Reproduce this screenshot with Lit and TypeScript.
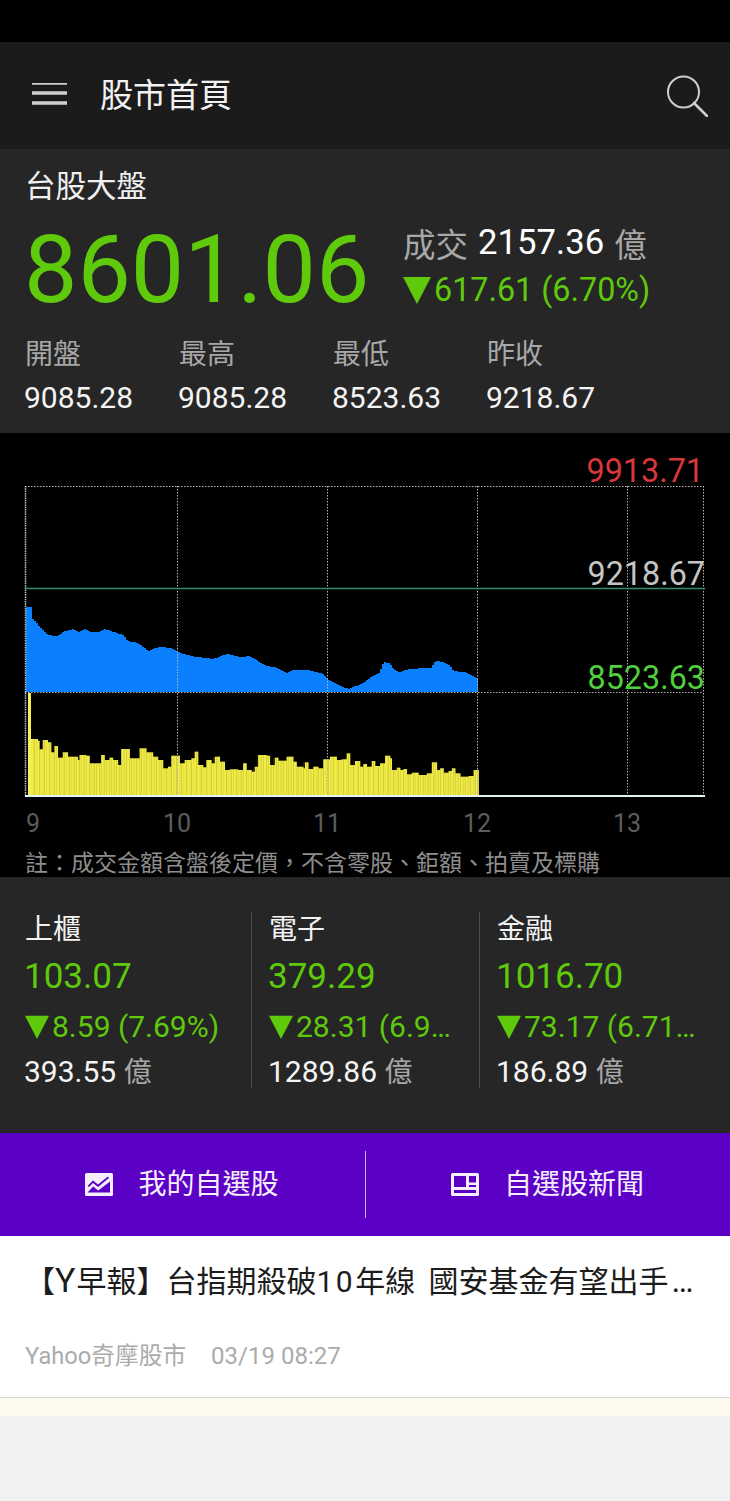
import { LitElement, html, css, svg } from "lit";
import { customElement } from "lit/decorators.js";

const BLUE: [number, number][] = [
  [26,607],[30,607],[31,618],[35,622],[40,628],[47,635],[57,636],[62,632],[72,629],[77,632],[83,629],[90,632],[97,632],
  [103,629],[110,631],[122,635],[127,641],[137,643],[145,649],[148,651],[153,648],[162,647],[170,648],[177,652],
  [190,656],[205,658],[212,659],[220,656],[227,654],[240,657],[248,656],[257,661],[265,666],[273,667],[287,673],
  [292,670],[307,670],[322,674],[328,680],[340,686],[348,689],[355,686],[362,683],[372,676],[378,673],[383,662],
  [388,663],[393,669],[399,673],[403,670],[422,668],[430,668],[435,661],[442,662],[448,665],[453,671],[463,672],
  [473,676],[478,679],
];

const Y1: [number, number][] = [
  [25,308],[33,447],[50,452],[55,478],[65,450],[80,457],[90,487],[100,468],[110,503],[125,487],[140,500],[170,510],
  [175,495],[195,497],[205,520],[240,495],[250,510],[265,503],[275,510],[290,525],[300,477],[325,505],[355,475],
  [375,487],[395,500],[410,510],[425,535],[440,530],[450,497],[475,520],[490,510],[510,505],[520,485],[530,525],
  [545,532],[555,510],[570,520],[580,500],[595,515],[610,540],[625,538],[650,540],[665,520],[675,540],[690,545],
  [700,530],[710,500],
];
const Y2: [number, number][] = [
  [0,520],[20,540],[40,520],[50,495],[75,497],[85,525],[100,503],[110,512],[135,500],[155,515],[165,530],[185,535],
  [190,517],[200,537],[215,530],[230,535],[245,508],[265,500],[285,510],[300,508],[315,490],[325,525],[340,513],
  [355,530],[365,522],[380,530],[395,513],[405,528],[420,520],[435,497],[448,505],[455,540],[470,533],[480,540],
  [490,537],[500,553],[515,548],[535,555],[560,550],[575,517],[590,540],[600,535],[610,548],[625,543],[635,535],
  [645,550],[660,560],[685,558],[700,540],
];
const YELLOW: [number, number][] = [
  ...Y1.map(([x, y]): [number, number] => [20 + x / 3, 590 + y / 3]),
  ...Y2.map(([x, y]): [number, number] => [240 + x / 3, 590 + y / 3]),
];

function barTop(x: number): number {
  let top = YELLOW[0][1];
  for (const [px, py] of YELLOW) {
    if (px <= x) top = py;
    else break;
  }
  return top;
}

function blueAt(x: number): number {
  for (let i = 1; i < BLUE.length; i++) {
    const [x0, y0] = BLUE[i - 1];
    const [x1, y1] = BLUE[i];
    if (x <= x1) return y0 + ((y1 - y0) * (x - x0)) / (x1 - x0);
  }
  return BLUE[BLUE.length - 1][1];
}

function bluePath(): string {
  let d = "M26 692";
  for (let x = 26; x < 478; x += 2) {
    const y = Math.round(blueAt(x));
    d += ` L${x} ${y} L${x + 2} ${y}`;
  }
  return d + " L478 692 Z";
}

function yellowBars() {
  const out = [];
  for (let x = 31; x < 478.5; x += 1.67) {
    const t = barTop(x);
    const w = Math.min(2, 479 - x);
    out.push(svg`<rect x=${x.toFixed(2)} y=${t.toFixed(1)} width=${w.toFixed(2)} height=${(796 - t).toFixed(1)} fill="#f0eb45"></rect>`);
  }
  for (let x = 33; x < 478; x += 3.34) {
    const t = barTop(x);
    out.push(svg`<rect x=${x.toFixed(2)} y=${t.toFixed(1)} width="0.5" height=${(796 - t).toFixed(1)} fill="#bdb935" opacity="0.35"></rect>`);
  }
  return out;
}

const VLINES = [177, 327, 477, 627, 703];
const XLABELS: [number, string][] = [[33, "9"], [177, "10"], [327, "11"], [477, "12"], [627, "13"]];

@customElement("app-root")
export class AppRoot extends LitElement {
  static styles = css`
    :host {
      display: block;
      width: 730px;
      height: 1501px;
      overflow: hidden;
      background: #f1f1f3;
      font-family: Roboto, "Noto Sans CJK TC", sans-serif;
    }
    .status { height: 42px; background: #000; }
    .bar {
      height: 107px;
      background: #1b1b1b;
      display: flex;
      align-items: center;
      padding: 0 22px 0 32px;
      box-sizing: border-box;
      color: #f2f2f2;
    }
    .bar h1 {
      margin: 0 0 0 33px;
      font-size: 33px;
      font-weight: 400;
      line-height: 40px;
      flex: 1;
    }
    .bar svg { display: block; }
    .panel { background: #262626; color: #f2f2f2; }
    .index { height: 284px; padding: 17px 0 0 25px; box-sizing: border-box; }
    .index h2 { margin: 0; font-size: 30.5px; font-weight: 400; line-height: 42px; color: #f0f0f0; }
    .main { display: flex; margin-top: 11px; height: 100px; }
    .big {
      font-size: 95px;
      line-height: 100px;
      color: #5fc90c;
      width: 379px;
      margin: 1px 0 0 -1px;
    }
    .side { font-size: 34.7px; }
    .side .row { display: flex; align-items: center; white-space: nowrap; height: 46px; }
    .side .row + .row { margin-top: 1px; height: 47px; }
    .muted { color: #a8a8a8; font-size: 32.5px; }
    .val { color: #fff; margin: 0 10px; }
    .green { color: #5fc90c; font-size: 32.3px; }
    .tri { display: block; flex: none; margin-right: 3px; }
    .stats { display: grid; grid-template-columns: repeat(4, 154px); margin-top: 16px; }
    .stats .lab { font-size: 28px; line-height: 40px; color: #a8a8a8; }
    .stats .num { font-size: 30px; line-height: 40px; color: #f4f4f4; margin-top: 3px; margin-left: -1px; }
    .chart { display: block; background: #000; }
    .chart text { font-family: Roboto, "Noto Sans CJK TC", sans-serif; }
    .sectors {
      height: 256px;
      box-sizing: border-box;
      padding: 35px 0 0 0;
      display: grid;
      grid-template-columns: 251px 228px 251px;
      align-items: start;
    }
    .sec {
      height: 176px;
      box-sizing: border-box;
      padding-left: 16px;
      border-left: 1px solid #4a4a4a;
      min-width: 0;
    }
    .sec:first-child { border-left: none; padding-left: 24px; }
    .sec .name { font-size: 28px; line-height: 36px; color: #f2f2f2; margin-left: 1px; }
    .sec .price { font-size: 35px; line-height: 48px; color: #5fc90c; margin-top: 5px; }
    .sec .chg {
      display: flex;
      align-items: center;
      font-size: 30px;
      line-height: 44px;
      color: #5fc90c;
      margin: 4px 0 0 1px;
      white-space: nowrap;
    }
    .sec .vol { font-size: 30px; line-height: 44px; color: #f4f4f4; margin-top: 1px; white-space: nowrap; }
    .sec .vol i { font-style: normal; color: #a8a8a8; font-size: 28px; }
    .actions {
      height: 103px;
      background: #5b00c5;
      display: grid;
      grid-template-columns: 1fr 1fr;
      align-items: center;
      color: #f5eefc;
    }
    .act {
      display: flex;
      align-items: center;
      justify-content: center;
      gap: 25px;
      font-size: 28px;
      height: 67px;
      padding-bottom: 5px;
      box-sizing: border-box;
    }
    .act span { margin-left: -2px; }
    .act + .act { border-left: 1px solid #c9aeea; }
    .act svg { display: block; margin: 5px 2px 0 -1px; }
    .news {
      height: 161px;
      background: #fff;
      border-bottom: 1px solid #d9d8d4;
    }
    .news .title {
      padding: 24px 0 0 25px;
      font-size: 30px;
      line-height: 44px;
      color: #1c1c1c;
      white-space: nowrap;
    }
    .wide-y { font-size: 34px; letter-spacing: 1px; line-height: 1; }
    .wide-d { letter-spacing: 2.5px; }
    .wide-s { letter-spacing: 6px; }
    .wide-e { font-size: 33px; letter-spacing: 2px; line-height: 1; margin-left: 3px; }
    .news .meta { display: flex; gap: 25px; margin: 35px 0 0 25px; font-size: 23.7px; line-height: 34px; color: #ababab; }
    .news .meta .time { font-size: 24px; }
    .cream { height: 18px; background: #fffaee; }
  `;

  private tri(size: number) {
    return html`<svg class="tri" width=${size} height=${size} viewBox="0 0 28 28"><polygon points="0,1 28,1 14,28" fill="#5fc90c"></polygon></svg>`;
  }

  private chart() {
    return html`<svg class="chart" width="730" height="444" viewBox="0 433 730 444">
      <path d=${bluePath()} fill="#0a80ff"></path>
      ${yellowBars()}
      <g stroke="#b4b4b4" stroke-width="1" stroke-dasharray="1.5 1.5" fill="none">
        <path d="M25 486.500H703"></path>
        <path d="M25 692.500H703"></path>
        ${VLINES.map((x) => svg`<path d="M${x}.5 486V796"></path>`)}
      </g>
      <path d="M25.500 486V796" stroke="#b9c4c4" stroke-width="1.5" stroke-dasharray="1.5 0.8" fill="none"></path>
      <path d="M26 588.500H705" stroke="#2f8a72" stroke-width="1.5" fill="none"></path>
      <path d="M25 796H705" stroke="#e4f2f2" stroke-width="2" fill="none"></path>
      <rect x="28" y="693" width="3" height="102" fill="#f5ef5a"></rect>
      <g font-size="32.3" text-anchor="end">
        <text x="704" y="482" fill="#d8373c">9913.71</text>
        <text x="705" y="585" fill="#c4c4c4">9218.67</text>
        <text x="705" y="689" fill="#52cf3f">8523.63</text>
      </g>
      <g font-size="25" text-anchor="middle" fill="#5c5c5c">
        ${XLABELS.map(([x, t]) => svg`<text x=${x} y="832">${t}</text>`)}
      </g>
      <text x="25" y="871" font-size="23" fill="#8e8e8e">註：成交金額含盤後定價，不含零股、鉅額、拍賣及標購</text>
    </svg>`;
  }

  private sector(name: string, price: string, chg: string, vol: string) {
    return html`<div class="sec">
      <div class="name">${name}</div>
      <div class="price">${price}</div>
      <div class="chg">${this.tri(24)}<span>${chg}</span></div>
      <div class="vol">${vol} <i>億</i></div>
    </div>`;
  }

  render() {
    return html`
      <div class="status"></div>
      <header class="bar">
        <svg width="35" height="26" viewBox="0 3 35 26"><path d="M0 3H35M0 13H35M0 23H35" stroke="#cfcfcf" stroke-width="3.6" fill="none"></path></svg>
        <h1>股市首頁</h1>
        <svg width="42" height="42" viewBox="0 0 42 42" fill="none" stroke="#cfcfcf"><circle cx="17.500" cy="17" r="15.500" stroke-width="2"></circle><path d="M28 28L41 41" stroke-width="2.6" stroke-linecap="round"></path></svg>
      </header>
      <section class="panel index">
        <h2>台股大盤</h2>
        <div class="main">
          <div class="big">8601.06</div>
          <div class="side">
            <div class="row"><span class="muted">成交</span><span class="val">2157.36</span><span class="muted">億</span></div>
            <div class="row green">${this.tri(28)}<span>617.61 (6.70%)</span></div>
          </div>
        </div>
        <div class="stats">
          <div><div class="lab">開盤</div><div class="num">9085.28</div></div>
          <div><div class="lab">最高</div><div class="num">9085.28</div></div>
          <div><div class="lab">最低</div><div class="num">8523.63</div></div>
          <div><div class="lab">昨收</div><div class="num">9218.67</div></div>
        </div>
      </section>
      ${this.chart()}
      <section class="panel sectors">
        ${this.sector("上櫃", "103.07", "8.59 (7.69%)", "393.55")}
        ${this.sector("電子", "379.29", "28.31 (6.9…", "1289.86")}
        ${this.sector("金融", "1016.70", "73.17 (6.71…", "186.89")}
      </section>
      <nav class="actions">
        <div class="act">
          <svg width="28" height="23" viewBox="0 0 28 23"><path fill="#f5eefc" fill-rule="evenodd" d="M1.500 0H26.500A1.500 1.500 0 0 1 28 1.500V21.500A1.500 1.500 0 0 1 26.500 23H1.500A1.500 1.500 0 0 1 0 21.500V1.500A1.500 1.500 0 0 1 1.500 0ZM2.500 13L8 7.500L13 11.500L23 3.500L24 5L13 14L8 10L4 14ZM3 19.500H25V8.500L13.200 17.500L8.200 13.500L3 19Z"></path></svg>
          <span>我的自選股</span>
        </div>
        <div class="act">
          <svg width="28" height="23" viewBox="0 0 28 23"><path fill="#f5eefc" fill-rule="evenodd" d="M1.500 0H26.500A1.500 1.500 0 0 1 28 1.500V21.500A1.500 1.500 0 0 1 26.500 23H1.500A1.500 1.500 0 0 1 0 21.500V1.500A1.500 1.500 0 0 1 1.500 0ZM3 3V14H15V3ZM18 3V9.500H25V3ZM18 12V14H25V12ZM3 17V20H25V17Z"></path></svg>
          <span>自選股新聞</span>
        </div>
      </nav>
      <article class="news">
        <div class="title">【<span class="wide-y">Y</span>早報】台指期殺破<span class="wide-d">10</span>年線<span class="wide-s"> </span>國安基金有望出手<span class="wide-e">…</span></div>
        <div class="meta"><span>Yahoo奇摩股市</span><span class="time">03/19 08:27</span></div>
      </article>
      <div class="cream"></div>
    `;
  }
}
